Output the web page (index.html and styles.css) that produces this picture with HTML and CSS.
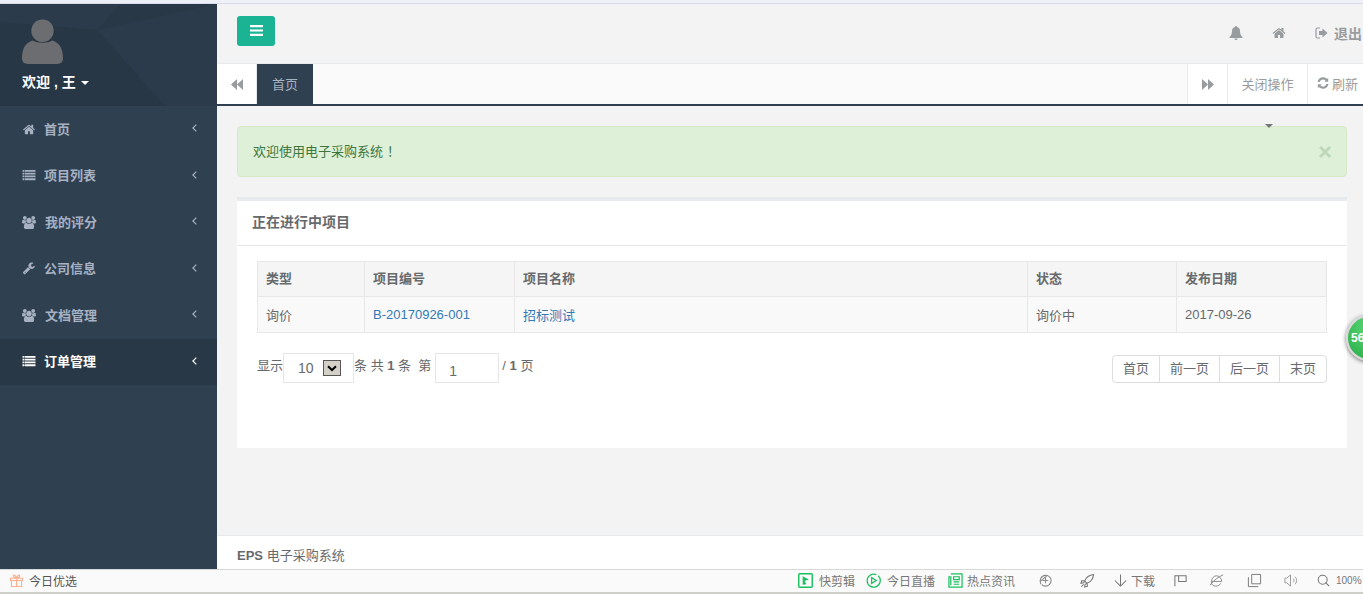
FILE: index.html
```html
<!DOCTYPE html>
<html lang="zh-CN">
<head>
<meta charset="utf-8">
<title>EPS 电子采购系统</title>
<link rel="stylesheet" href="styles.css">
</head>
<body>
<svg class="defs" width="0" height="0" aria-hidden="true">
  <symbol id="i-home" viewBox="0 0 1664 1792"><path d="M1408 992v480q0 26-19 45t-45 19H960v-384H704v384H320q-26 0-45-19t-19-45V992q0-1 .5-3t.5-3l575-474 575 474q1 2 1 6zm223-69-62 74q-8 9-21 11h-3q-13 0-21-7L832 424 140 1001q-12 8-24 7-13-2-21-11l-62-74q-8-10-7-23.500t11-21.500l719-599q32-26 76-26t76 26l244 204V288q0-14 9-23t23-9h192q14 0 23 9t9 23v408l219 182q10 8 11 21.500t-7 23.500z"/></symbol>
  <symbol id="i-list" viewBox="0 0 1792 1792"><path d="M256 1312v192q0 13-9.500 22.500T224 1536H32q-13 0-22.500-9.500T0 1504v-192q0-13 9.500-22.500T32 1280h192q13 0 22.500 9.500T256 1312zm0-384v192q0 13-9.500 22.500T224 1152H32q-13 0-22.500-9.500T0 1120V928q0-13 9.500-22.500T32 896h192q13 0 22.500 9.500T256 928zm0-384v192q0 13-9.500 22.500T224 768H32q-13 0-22.500-9.500T0 736V544q0-13 9.500-22.500T32 512h192q13 0 22.500 9.500T256 544zm1536 768v192q0 13-9.500 22.500t-22.500 9.500H352q-13 0-22.500-9.500T320 1504v-192q0-13 9.500-22.500t22.500-9.500h1408q13 0 22.500 9.500t9.500 22.500zM256 160v192q0 13-9.500 22.500T224 384H32q-13 0-22.500-9.500T0 352V160q0-13 9.500-22.500T32 128h192q13 0 22.500 9.500T256 160zm1536 768v192q0 13-9.500 22.500t-22.500 9.500H352q-13 0-22.500-9.500T320 1120V928q0-13 9.500-22.500T352 896h1408q13 0 22.500 9.500t9.500 22.500zm0-384v192q0 13-9.500 22.500T1760 768H352q-13 0-22.500-9.500T320 736V544q0-13 9.500-22.500T352 512h1408q13 0 22.500 9.500t9.500 22.500zm0-384v192q0 13-9.500 22.500T1760 384H352q-13 0-22.500-9.500T320 352V160q0-13 9.500-22.500T352 128h1408q13 0 22.500 9.500t9.500 22.500z"/></symbol>
  <symbol id="i-users" viewBox="0 0 1920 1792"><path d="M593 896q-162 5-265 128H194q-82 0-138-40.500T0 865q0-353 124-353 6 0 43.500 21t97.500 42.500T384 597q67 0 133-23-5 37-5 66 0 139 81 256zm1071 637q0 120-73 189.500t-194 69.500H523q-121 0-194-69.500T256 1533q0-53 3.500-103.500t14-109T300 1212t43-97.500 62-81 85.500-53.500T602 960q10 0 43 21.500t73 48 107 48 135 21.500 135-21.500 107-48 73-48 43-21.500q61 0 111.500 20t85.500 53.500 62 81 43 97.500 26.500 108.500 14 109 3.500 103.500zM640 256q0 106-75 181t-181 75-181-75-75-181 75-181T384 0t181 75 75 181zm704 384q0 159-112.500 271.500T960 1024 688.500 911.500 576 640t112.500-271.500T960 256t271.500 112.500T1344 640zm576 225q0 78-56 118.500t-138 40.500h-134q-103-123-265-128 81-117 81-256 0-29-5-66 66 23 133 23 59 0 119-21.500t97.500-42.500 43.500-21q124 0 124 353zm-128-609q0 106-75 181t-181 75-181-75-75-181 75-181 181-75 181 75 75 181z"/></symbol>
  <symbol id="i-wrench" viewBox="0 0 1664 1792"><path d="M363 1408q0-26-19-45t-45-19-45 19-19 45 19 45 45 19 45-19 19-45zm644-420-682 682q-37 37-90 37-52 0-91-37L38 1563q-38-36-38-90 0-53 38-91l681-681q39 98 114.500 173.500T1007 988zm634-435q0 39-23 106-47 134-164.500 217.500T1195 960q-185 0-316.500-131.500T747 512t131.500-316.500T1195 64q58 0 121.500 16.500T1424 127q16 11 16 28t-16 28l-293 169v224l193 107q5-3 79-48.500t135.500-81T1609 518q15 0 23.500 10t8.500 25z"/></symbol>
  <symbol id="i-chev" viewBox="0 0 5 8"><path d="M4.300 .6.900 4l3.400 3.400" fill="none" stroke="currentColor" stroke-width="1.200"/></symbol>
</svg>

<div class="browser-top"></div>

<div class="app">
  <aside class="sidebar">
    <div class="profile">
      <svg class="profile-bg" viewBox="0 0 217 102" preserveAspectRatio="none" aria-hidden="true">
        <path d="M97 26 217 0v102H165z" fill="#2b3b4c"/>
        <path d="M0 18 97 26l68 76H0z" fill="#273746"/>
        <path d="M97 26 120 0H0v18z" fill="#2b3b4b"/>
      </svg>
      <svg class="avatar" viewBox="0 0 42 46" aria-hidden="true">
        <circle cx="21" cy="12" r="11.500" fill="#6b6d70"/>
        <path d="M0 40c0-10 4-16 11-18 5 3 15 3 20 0 7 2 11 8 11 18 0 4-2 6-6 6H6c-4 0-6-2-6-6z" fill="#6b6d70"/>
      </svg>
      <div class="welcome">欢迎 , 王 <span class="caret-white"></span></div>
    </div>
    <nav class="nav">
      <a class="nav-item"><svg class="ni"><use href="#i-home"/></svg><span class="nl nl-a">首页</span><svg class="chev"><use href="#i-chev"/></svg></a>
      <a class="nav-item"><svg class="ni"><use href="#i-list"/></svg><span class="nl nl-b">项目列表</span><svg class="chev"><use href="#i-chev"/></svg></a>
      <a class="nav-item"><svg class="ni"><use href="#i-users"/></svg><span class="nl nl-c">我的评分</span><svg class="chev"><use href="#i-chev"/></svg></a>
      <a class="nav-item"><svg class="ni"><use href="#i-wrench"/></svg><span class="nl nl-a">公司信息</span><svg class="chev"><use href="#i-chev"/></svg></a>
      <a class="nav-item"><svg class="ni"><use href="#i-users"/></svg><span class="nl nl-c">文档管理</span><svg class="chev"><use href="#i-chev"/></svg></a>
      <a class="nav-item active"><svg class="ni"><use href="#i-list"/></svg><span class="nl nl-b">订单管理</span><svg class="chev"><use href="#i-chev"/></svg></a>
    </nav>
  </aside>

  <main class="main">
    <header class="topbar">
      <button class="menu-btn" aria-label="菜单">
        <svg viewBox="0 0 13 11" width="13" height="11"><path d="M0 0h13v2.200H0zM0 4.400h13v2.200H0zM0 8.800h13V11H0z" fill="#fff"/></svg>
      </button>
      <div class="top-actions">
        <svg class="top-ico bell" viewBox="0 0 14 14" aria-hidden="true"><path d="M7 0c.7 0 1 .4 1 1 2 .4 3 2 3 4 0 3 1 5 2.500 6v1H.500v-1C2 10 3 8 3 5c0-2 1-3.600 3-4 0-.6.300-1 1-1zM5.500 12.500h3c0 1-.6 1.500-1.500 1.500s-1.500-.5-1.500-1.500z"/></svg>
        <svg class="top-ico home"><use href="#i-home"/></svg>
        <span class="logout">
          <svg class="top-ico out" viewBox="0 0 13 12" aria-hidden="true"><path d="M5 1H2.500C1.500 1 1 1.500 1 2.500v7c0 1 .5 1.500 1.500 1.500H5" fill="none" stroke-width="1.200"/><path d="M7.500 1.500 12.500 6l-5 4.500V8H4V4h3.500z" stroke="none"/></svg>
          <b>退出</b>
        </span>
      </div>
    </header>

    <div class="tabs">
      <button class="tab-nav tab-left"><svg viewBox="0 0 12 11" width="12" height="11"><path d="M6 0v11L0 5.500zM12 0v11L6 5.500z"/></svg></button>
      <span class="tab-current">首页</span>
      <span class="tab-fill"></span>
      <button class="tab-nav tab-right"><svg viewBox="0 0 12 11" width="12" height="11"><path d="M0 0v11l6-5.500zM6 0v11l6-5.500z"/></svg></button>
      <span class="tab-btn tab-close">关闭操作</span>
      <span class="tab-btn tab-refresh"><svg viewBox="0 0 12 12" width="12" height="12"><path d="M11.500 7c-.5 3-2.800 4.700-5.500 4.700-1.600 0-3-.6-4.100-1.600L.8 11.200V7.300h3.900L3.400 8.600c.7.7 1.600 1 2.600 1 1.500 0 2.800-.9 3.300-2.600zM11.200.8v3.900H7.300l1.300-1.300C7.900 2.700 7 2.400 6 2.400c-1.500 0-2.800.9-3.300 2.600H.5C1 2 3.300.3 6 .3c1.600 0 3 .6 4.100 1.600z"/></svg>刷新</span>
    </div>

    <div class="content">
      <div class="alert">
        <span class="alert-text">欢迎使用电子采购系统<span class="punct">！</span></span>
        <span class="alert-x">×</span>
      </div>
      <section class="panel">
        <h5 class="panel-title">正在进行中项目</h5>
        <div class="panel-body">
          <table class="grid">
            <colgroup><col class="c1"><col class="c2"><col class="c3"><col class="c4"><col class="c5"></colgroup>
            <thead>
              <tr><th>类型</th><th>项目编号</th><th>项目名称</th><th>状态</th><th>发布日期</th></tr>
            </thead>
            <tbody>
              <tr><td>询价</td><td><a class="link">B-20170926-001</a></td><td><a class="link">招标测试</a></td><td>询价中</td><td>2017-09-26</td></tr>
            </tbody>
          </table>
          <div class="pager">
            <div class="pager-info">
              <span>显示</span>
              <span class="select-box">10<span class="select-arrow"><svg viewBox="0 0 10 7" width="10" height="7"><path d="M1 1.200 5 5l4-3.800" fill="none" stroke="#000" stroke-width="2"/></svg></span></span>
              <span class="count">条 共 <b>1</b> 条&nbsp; 第</span>
              <span class="page-input">1</span>
              <span class="count">/ <b>1</b> 页</span>
            </div>
            <div class="pages">
              <a>首页</a><a>前一页</a><a>后一页</a><a>末页</a>
            </div>
          </div>
        </div>
      </section>
    </div>

    <footer class="footer"><b>EPS</b> 电子采购系统</footer>
  </main>
</div>

<div class="statusbar">
  <div class="sb-left">
    <svg class="sb-ico gift" viewBox="0 0 16 16" aria-hidden="true"><g fill="none" stroke="#f9b08f" stroke-width="1.200"><path d="M1.600 5.600h12.800v2.400H1.600zM2.600 8v6.400h10.800V8M8 5.600v8.800M8 5.300C6 5.300 4.300 4 4.600 2.700 5 1.500 7 2 8 5.300 9 2 11 1.500 11.400 2.700 11.700 4 10 5.300 8 5.300z"/></g></svg>
    <span>今日优选</span>
  </div>
  <div class="sb-right">
    <span class="sb-item w1"><svg class="sb-ico" viewBox="0 0 16 16"><rect x=".8" y=".8" width="14.400" height="14.400" rx="1" fill="none" stroke="#18c05e" stroke-width="1.500"/><path d="M5 3.500 11.500 7 7 8.500 9 12 5 12.500z" fill="#18c05e"/></svg>快剪辑</span>
    <span class="sb-item w2"><svg class="sb-ico" viewBox="0 0 16 16"><path d="M13 3a7 7 0 1 1-2-1.300" fill="none" stroke="#18c05e" stroke-width="1.300"/><path d="M6 5v6l5-3z" fill="none" stroke="#18c05e" stroke-width="1.300"/></svg>今日直播</span>
    <span class="sb-item w3"><svg class="sb-ico" viewBox="0 0 16 16"><path d="M3 1h12v14H1V4h2v9M6 4h6v3H6zM6 9.500h6M6 12h6" fill="none" stroke="#18c05e" stroke-width="1.300"/></svg>热点资讯</span>
    <span class="sb-glyph g1"><svg class="sb-ico" viewBox="0 0 16 16"><path d="M3 12C1 8 3 3 8 2.500c3.500 0 6 2.500 6 5.500s-2.500 6-6 6c-2 0-3.500-1-4-1.500" fill="none" stroke="#888" stroke-width="1.100"/><path d="M8 5v6M5 8h6M2.500 9 10 2.500" stroke="#888" stroke-width="1.100" fill="none"/></svg></span>
    <span class="sb-glyph g2"><svg class="sb-ico" viewBox="0 0 16 16"><path d="M14.500 1.500c-5 .5-8 3-9.500 7l2.500 2.500c4-1.500 6.500-4.500 7-9.500zM5 8.500 2 8l-1 3 3-.5zM7.500 11 8 14l-3 1 .5-3zM4 12l-2.500 2.500" fill="none" stroke="#777" stroke-width="1.100"/></svg></span>
    <span class="sb-item w4"><svg class="sb-ico" viewBox="0 0 16 16"><path d="M8 1.500v12.500M2 8l6 6 6-6" fill="none" stroke="#777" stroke-width="1.100"/></svg>下载</span>
    <span class="sb-glyph g3"><svg class="sb-ico" viewBox="0 0 16 16"><path d="M2 14V3h12v6H6V3" fill="none" stroke="#777" stroke-width="1.100"/></svg></span>
    <span class="sb-glyph g4"><svg class="sb-ico" viewBox="0 0 16 16"><path d="M3 9h10.500C13.500 5.500 11 3 8 3 5 3 3 5.500 2.500 9 2.300 12 4 14 7 14c2.500 0 4.500-1 5.500-3M1 13C5 8 10 4 15 2" fill="none" stroke="#888" stroke-width="1"/></svg></span>
    <span class="sb-glyph g5"><svg class="sb-ico" viewBox="0 0 16 16"><path d="M5 1.500h9.500v10H5zM1.500 4.500v10H12" fill="none" stroke="#777" stroke-width="1"/></svg></span>
    <span class="sb-glyph g6"><svg class="sb-ico" viewBox="0 0 16 16"><path d="M2 5.500v5h2l4 3.500V2L4 5.500zM11 6c1 1 1 3 0 4M13 4c2 2 2 6 0 8" fill="none" stroke="#999" stroke-width="1"/></svg></span>
    <span class="sb-glyph g7"><svg class="sb-ico small" viewBox="0 0 16 16"><circle cx="7" cy="7" r="5.500" fill="none" stroke="#777" stroke-width="1.300"/><path d="M10.500 10.500 15 15" stroke="#777" stroke-width="1.300"/></svg></span>
    <span class="zoom">100%</span>
  </div>
</div>

<span class="stray-caret"></span>
<div class="ball"><span>56</span></div>
</body>
</html>
```

FILE: styles.css
```css
* { box-sizing: border-box; }
html, body { margin: 0; padding: 0; height: 594px; overflow: hidden; }
body {
  position: relative;
  width: 1363px;
  display: flex;
  flex-direction: column;
  font-family: "Liberation Sans", "Noto Sans CJK SC", sans-serif;
  font-size: 13px;
  color: #676a6c;
  background: #f3f3f4;
}
.defs { position: absolute; }
svg { display: block; flex: none; }
button { border: 0; padding: 0; font: inherit; }

.browser-top { height: 4px; flex: none; background: #fff; border-top: 3px solid #eef0f8; border-bottom: 1px solid #d8dcea; }

.app { flex: none; height: 565px; display: flex; }

/* sidebar */
.sidebar { width: 217px; flex: none; background: #2f4050; }
.profile { position: relative; height: 102px; padding: 15px 0 0 22px; background: #293846; overflow: hidden; }
.profile-bg { position: absolute; inset: 0; width: 100%; height: 100%; }
.avatar { position: relative; width: 41px; height: 45px; }
.welcome { position: relative; margin-top: 8px; color: #fff; font-weight: 700; font-size: 14px; line-height: 20px; }
.caret-white {
  display: inline-block; margin-left: 1px; vertical-align: middle;
  border-left: 4px solid transparent; border-right: 4px solid transparent; border-top: 4px solid #fff;
}
.nav-item {
  height: 46.500px; display: flex; align-items: center; padding: 0 20px 0 22px;
  color: #a7b1c2; font-weight: 700; font-size: 13px;
}
.nav-item .ni { width: 14px; height: 13px; fill: currentColor; }
.nl { flex: 1; padding-bottom: 2px; }
.nl-a { padding-left: 8px; }
.nl-b { padding-left: 8px; }
.nl-c { padding-left: 9px; }
.chev { width: 5px; height: 8px; margin-top: -2px; color: #a7b1c2; }
.nav-item.active { background: #293846; color: #fff; }
.nav-item.active .chev { color: #fff; }

/* main */
.main { flex: 1; min-width: 0; display: flex; flex-direction: column; }
.topbar {
  height: 60px; flex: none; display: flex; align-items: center; justify-content: space-between;
  padding: 0 0 0 20px; border-bottom: 1px solid #e7eaec;
}
.menu-btn {
  width: 38px; height: 30px; margin-top: -6px; background: #1ab394; border-radius: 3px;
  display: flex; align-items: center; justify-content: center;
}
.top-actions { display: flex; align-items: center; color: #999c9e; padding-bottom: 2px; }
.top-ico { fill: #999c9e; stroke: #999c9e; stroke-width: 0; }
.bell { width: 14px; height: 14px; }
.home { width: 14px; height: 14px; margin-left: 29px; }
.out { width: 13px; height: 12px; }
.logout { display: flex; align-items: center; gap: 6px; margin-left: 29px; width: 48px; white-space: nowrap; overflow: hidden; }
.logout b { font-size: 14px; }

.tabs {
  height: 42px; flex: none; display: flex; align-items: stretch; background: #fff;
  border-bottom: 2px solid #2f4050; color: #999c9e;
}
.tab-nav { width: 40px; background: #fff; display: flex; align-items: center; justify-content: center; fill: #999c9e; }
.tab-left { border-right: 1px solid #e7eaec; }
.tab-right { border-left: 1px solid #e7eaec; }
.tab-current { width: 56px; background: #2f4050; color: #a7b1c2; display: flex; align-items: center; justify-content: center; padding-bottom: 2px; }
.tab-fill { flex: 1; background: #fafafa; }
.tab-btn { display: flex; align-items: center; border-left: 1px solid #e7eaec; font-size: 13px; white-space: nowrap; padding-bottom: 2px; }
.tab-close { width: 80px; justify-content: center; }
.tab-refresh { width: 56px; gap: 3px; fill: #999c9e; padding-left: 9px; }

.content { flex: 1; min-height: 0; padding: 20px 16px 0 20px; }
.alert {
  height: 51px; display: flex; align-items: center; justify-content: space-between;
  padding: 0 14px 0 15px; background: #dff0d8; border: 1px solid #d6e9c6; border-radius: 4px; color: #3c763d;
}
.alert-text { padding-bottom: 3px; }
.punct { display: inline-block; padding-left: 4px; }
.alert-x { font-size: 24px; font-weight: 700; color: #3c763d; opacity: .2; }

.panel { margin-top: 20px; height: 251px; background: #fff; border-top: 4px solid #e7eaec; }
.panel-title {
  margin: 0; height: 45px; line-height: 43px; padding-left: 15px; font-size: 14px; font-weight: 700;
  border-bottom: 1px solid #e7eaec;
}
.panel-body { padding: 15px 20px 0; }
.grid { width: 1069px; border-collapse: collapse; table-layout: fixed; }
.c1 { width: 107px; }
.c2 { width: 150px; }
.c3 { width: 513px; }
.c4 { width: 149px; }
.c5 { width: 150px; }
.grid th, .grid td { border: 1px solid #e7e7e7; padding: 0 8px; text-align: left; font-size: 13px; }
.grid th { height: 35px; background: #f5f5f6; font-weight: 700; padding-bottom: 3px; }
.grid td { height: 36px; background: #f9f9f9; }
.link { color: #337ab7; }

.pager { display: flex; justify-content: space-between; margin-top: 20px; }
.pager-info { display: flex; align-items: flex-start; height: 30px; }
.pager-info > span:first-child { line-height: 26px; }
.select-box {
  width: 71px; height: 30px; border: 1px solid #e5e6e7; display: flex; align-items: center;
  padding-left: 14px; font-size: 14px; position: relative; background: #fff;
}
.select-arrow {
  position: absolute; left: 39px; top: 6px; width: 18px; height: 16px; background: #d4d0c8;
  border: 1px solid #555; display: flex; align-items: center; justify-content: center;
}
.count { line-height: 26px; white-space: nowrap; }
.count b { font-weight: 700; }
.page-input {
  width: 64px; height: 30px; margin: 0 3px 0 4px; border: 1px solid #e5e6e7; background: #fff;
  padding: 8px 0 0 13px; font-size: 14px; line-height: 18px;
}
.pages { display: flex; margin-top: 2px; height: 28px; border: 1px solid #ddd; border-radius: 4px; }
.pages a { display: flex; align-items: center; justify-content: center; padding: 0 10px 3px; border-left: 1px solid #ddd; white-space: nowrap; }
.pages a:first-child { border-left: 0; }

.footer {
  height: 34px; flex: none; background: #fff; border-top: 1px solid #e7eaec;
  padding: 10px 20px 0; line-height: 20px; font-size: 13px; white-space: nowrap;
}
.footer b { font-weight: 700; }

/* status bar */
.statusbar {
  flex: none; height: 25px; display: flex; justify-content: space-between; align-items: center;
  background: #fafafa; border-top: 1px solid #d8d8d8; border-bottom: 2px solid #cfcfc8;
  font-size: 12px; color: #555; padding-left: 9px;
}
.sb-left { display: flex; align-items: center; gap: 5px; padding-bottom: 2px; }
.sb-right { display: flex; align-items: center; color: #777; padding-bottom: 2px; }
.sb-ico { width: 15px; height: 15px; }
.sb-ico.small { width: 13px; height: 13px; }
.sb-item { display: flex; align-items: center; gap: 6px; white-space: nowrap; }
.w1 { width: 68px; }
.w2 { width: 82px; }
.w3 { width: 90px; gap: 4px; }
.w4 { width: 60px; gap: 3px; }
.sb-glyph { display: flex; }
.g1 { width: 42px; }
.g2 { width: 33px; }
.g3 { width: 36px; }
.g4 { width: 38px; }
.g5 { width: 36px; }
.g6 { width: 34px; }
.g7 { width: 19px; }
.zoom { font-size: 10px; width: 27px; white-space: nowrap; overflow: hidden; }

/* overlays */
.stray-caret {
  position: absolute; left: 1265px; top: 124px;
  border-left: 4px solid transparent; border-right: 4px solid transparent; border-top: 4px solid #777;
}
.ball {
  position: absolute; left: 1346px; top: 315px; width: 46px; height: 46px; border-radius: 50%;
  background: radial-gradient(circle at 60% 25%, #62dc7a, #33b653 75%);
  border: 2px solid #d8d8d8;
  box-shadow: 0 1px 4px rgba(0,0,0,.55);
  color: #fff; font-size: 12px; font-weight: 700; line-height: 42px; padding-left: 3px;
}
```
